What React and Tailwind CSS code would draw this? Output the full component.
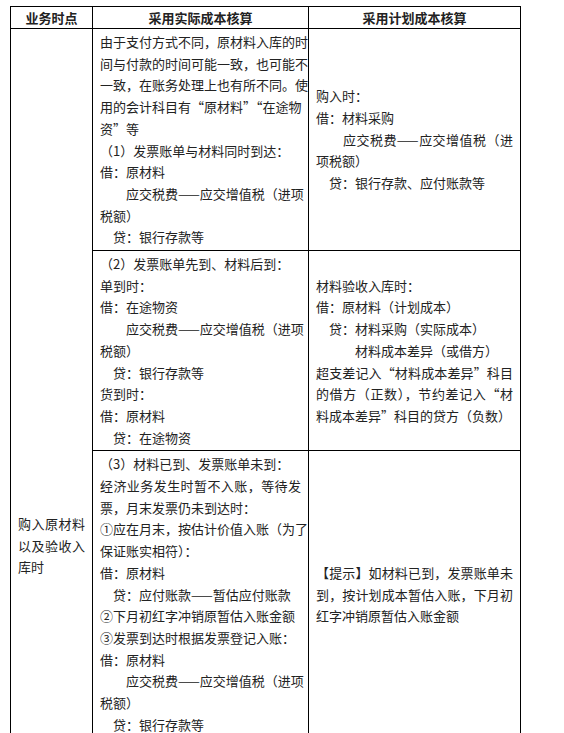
import React from 'react';

// j() marks a line that fills the cell width (justified like the source page)
const j = (text) => ({ text, full: true });

const rows = [
  {
    actual: [
      j('由于支付方式不同，原材料入库的时'),
      j('间与付款的时间可能一致，也可能不'),
      j('一致，在账务处理上也有所不同。使'),
      j('用的会计科目有“原材料”“在途物'),
      '资”等',
      '（1）发票账单与材料同时到达：',
      '借：原材料',
      j('　　应交税费——应交增值税（进项'),
      '税额）',
      '　贷：银行存款等',
    ],
    planned: [
      '购入时：',
      '借：材料采购',
      j('　　应交税费——应交增值税（进'),
      '项税额）',
      '　贷：银行存款、应付账款等',
    ],
  },
  {
    actual: [
      '（2）发票账单先到、材料后到：',
      '单到时：',
      '借：在途物资',
      j('　　应交税费——应交增值税（进项'),
      '税额）',
      '　贷：银行存款等',
      '货到时：',
      '借：原材料',
      '　贷：在途物资',
    ],
    planned: [
      '材料验收入库时：',
      '借：原材料（计划成本）',
      '　贷：材料采购（实际成本）',
      '　　　材料成本差异（或借方）',
      j('超支差记入“材料成本差异”科目'),
      j('的借方（正数），节约差记入“材'),
      '料成本差异”科目的贷方（负数）',
    ],
  },
  {
    actual: [
      '（3）材料已到、发票账单未到：',
      j('经济业务发生时暂不入账，等待发'),
      '票，月末发票仍未到达时：',
      j('①应在月末，按估计价值入账（为了'),
      '保证账实相符）：',
      '借：原材料',
      '　贷：应付账款——暂估应付账款',
      '②下月初红字冲销原暂估入账金额',
      '③发票到达时根据发票登记入账：',
      '借：原材料',
      j('　　应交税费——应交增值税（进项'),
      '税额）',
      '　贷：银行存款等',
    ],
    planned: [
      j('【提示】如材料已到，发票账单未'),
      j('到，按计划成本暂估入账，下月初'),
      '红字冲销原暂估入账金额',
    ],
  },
];

const Lines = ({ lines }) =>
  lines.map((line, i) => {
    const text = typeof line === 'string' ? line : line.text;
    const full = typeof line !== 'string' && line.full;
    return (
      <div
        key={i}
        className={`whitespace-pre ${full ? 'text-justify [text-align-last:justify]' : ''}`}
      >
        {text}
      </div>
    );
  });

const App = () => {
  return (
    <div className="min-h-screen bg-white pl-[10px] pt-[6px] font-['Noto_Sans_CJK_SC',sans-serif] text-[13px] text-[#222]">
      <table className="w-[510px] table-fixed border-collapse">
        <colgroup>
          <col className="w-[82px]" />
          <col className="w-[216px]" />
          <col className="w-[212px]" />
        </colgroup>
        <thead>
          <tr>
            <th className="border border-black px-[7px] py-0 text-center font-bold leading-[21px] text-[#222]">业务时点</th>
            <th className="border border-black px-[7px] py-0 text-center font-bold leading-[21px] text-[#222]">采用实际成本核算</th>
            <th className="border border-black px-[7px] py-0 text-center font-bold leading-[21px] text-[#222]">采用计划成本核算</th>
          </tr>
        </thead>
        <tbody>
          {rows.map((row, i) => (
            <tr key={i}>
              {i === 0 && (
                <td rowSpan={rows.length} className="border border-black px-[7px] pt-[484px] align-top leading-[21.7px]">
                  <Lines lines={[j('购入原材料'), j('以及验收入'), '库时']} />
                </td>
              )}
              <td className="border border-black px-[7px] py-[2px] align-top leading-[21.7px]">
                <Lines lines={row.actual} />
              </td>
              <td className="border border-black px-[7px] py-[2px] align-middle leading-[21.7px]">
                <Lines lines={row.planned} />
              </td>
            </tr>
          ))}
        </tbody>
      </table>
    </div>
  );
};

export default App;
